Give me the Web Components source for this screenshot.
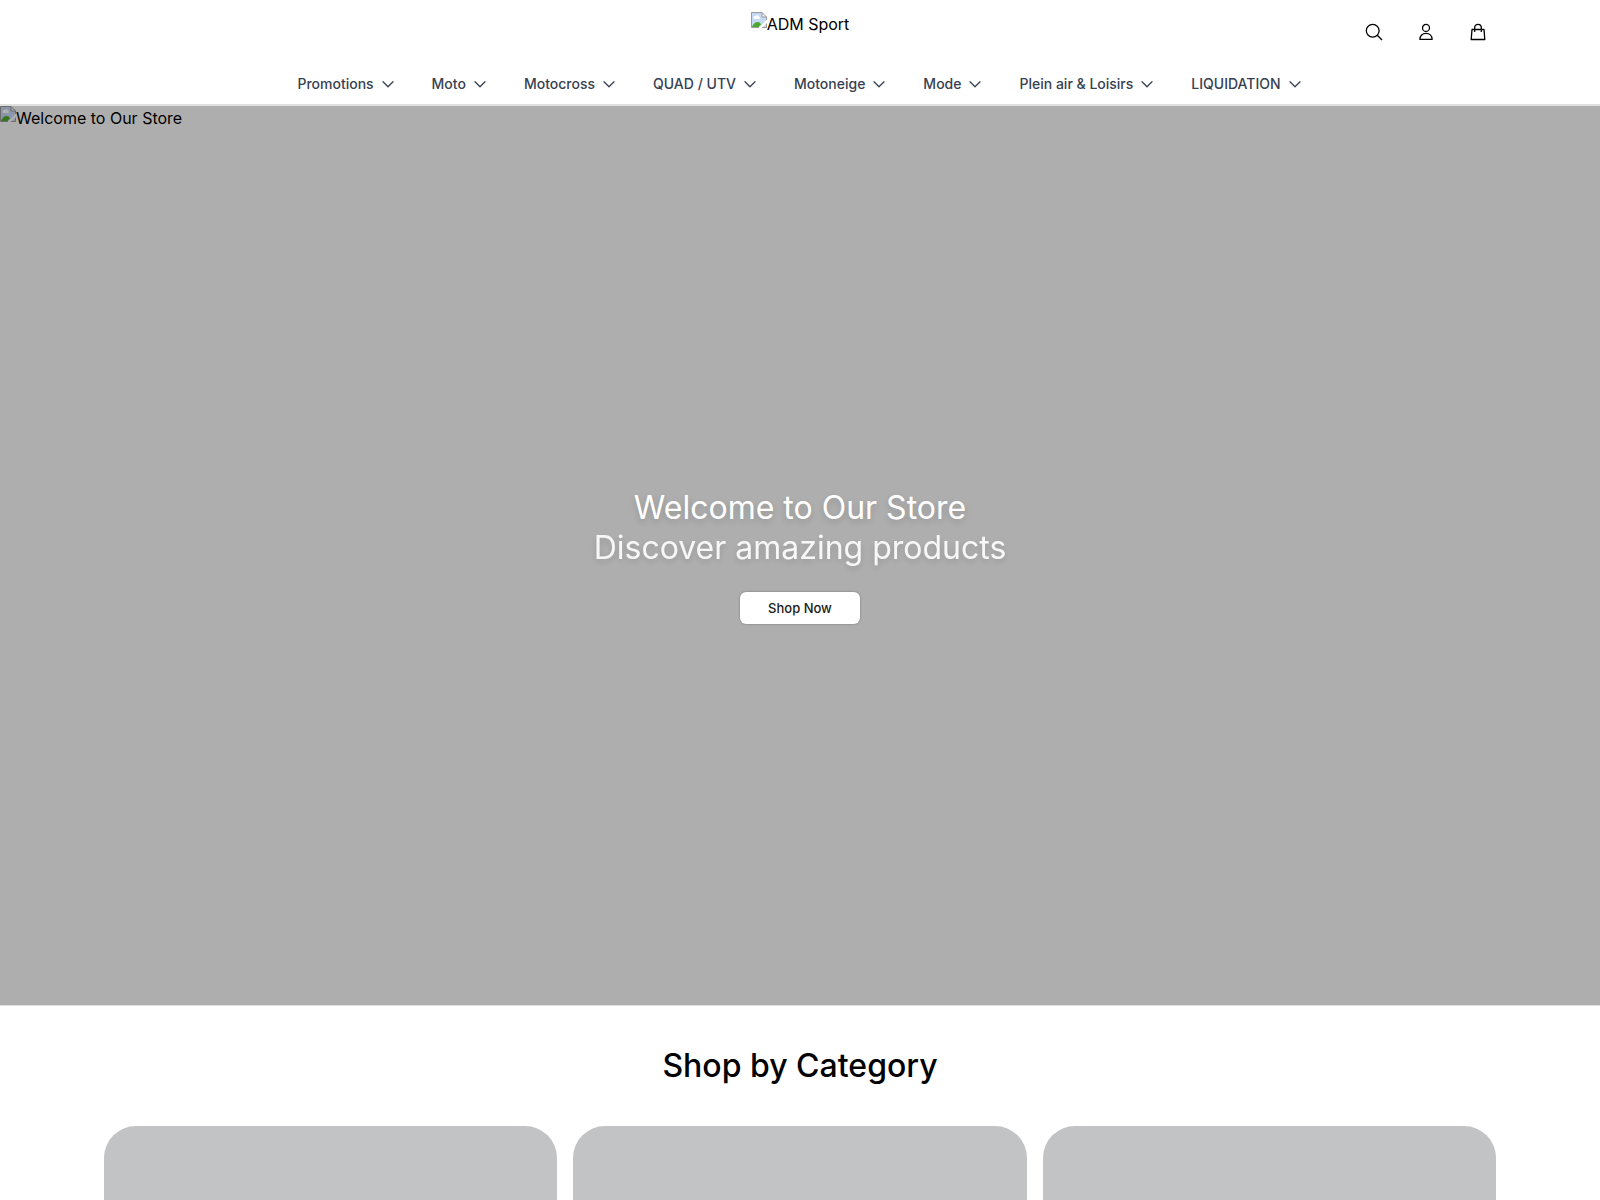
<!DOCTYPE html>
<html lang="fr">
<head>
<meta charset="utf-8">
<meta name="viewport" content="width=device-width, initial-scale=1">
<title>ADM Sport</title>
<style>
  html, body {
    margin: 0;
    background: #fff;
    color: #000;
    font-family: Inter, "Liberation Sans", sans-serif;
    font-size: 16px;
    line-height: 24px;
  }
</style>
</head>
<body>

<template id="alt_image_tpl">
<style>
  :host {
    display: flex;
    align-items: flex-start;
  }
  svg {
    flex: none;
    width: 16px;
    height: 16px;
    filter: brightness(var(--alt-brightness, 1));
  }
</style>
<svg viewBox="0 0 16 16" aria-hidden="true">
  <path d="M.5 .5H11L15.500 5V8L8 15.500H.5Z" fill="#c5d8f4"/>
  <path d="M2.500 5.500a1.500 1.500 0 0 1 2-1.500 2 2 0 0 1 3.500 1 1 1 0 0 1 0 2H3.500a1 1 0 0 1-1-1.500Z" fill="#fff"/>
  <path d="M1 15c1-3 3-5 5.500-5 1.600 0 2.700.7 3.500 2.500L7.500 15Z" fill="#4ca92c"/>
  <path d="M15.500 11.500v4h-4Z" fill="#c5d8f4"/>
  <path d="M11 .5V5h4.500Z" fill="#f5f5f5"/>
  <path d="M15.500 8V5L11 .5H.5v15H8M11 .5V5h4.500M11 15.500h4.500V11.500" fill="none" stroke="#9a9a9a"/>
</svg>
<span><slot></slot></span>
</template>

<template id="nav_item_tpl">
<style>
  :host {
    display: block;
  }
  a {
    display: flex;
    align-items: center;
    gap: 6px;
    color: #374151;
    font-size: 14px;
    font-weight: 500;
    line-height: 20px;
    text-decoration: none;
    white-space: nowrap;
  }
  svg {
    width: 16px;
    height: 16px;
  }
</style>
<a href="#"><slot></slot>
  <svg viewBox="0 0 16 16" fill="none" stroke="currentColor" stroke-width="1.3" stroke-linecap="round" stroke-linejoin="round" aria-hidden="true"><path d="M3 5.700 8 10.700 13 5.700"/></svg>
</a>
</template>

<template id="store_header_tpl">
<style>
  :host {
    display: block;
    background: #fff;
    border-bottom: 2px solid #e0e0e0;
  }
  .top {
    display: grid;
    grid-template-columns: 1fr auto 1fr;
    box-sizing: border-box;
    max-width: 1440px;
    min-height: 64px;
    margin: 0 auto;
    padding: 12px 24px;
  }
  .logo {
    grid-column: 2;
    color: inherit;
    text-decoration: none;
  }
  .actions {
    display: flex;
    justify-content: flex-end;
    align-items: center;
    gap: 16px;
  }
  button {
    display: flex;
    align-items: center;
    justify-content: center;
    width: 36px;
    height: 36px;
    padding: 0;
    border: 0;
    background: none;
    color: #000;
    cursor: pointer;
  }
  .actions svg {
    width: 20px;
    height: 20px;
    fill: none;
    stroke: currentColor;
    stroke-width: 1.3;
  }
  nav {
    display: flex;
    justify-content: center;
    flex-wrap: wrap;
    gap: 36px;
    padding: 10px 24px;
  }
</style>
<div class="top">
  <a class="logo" href="#"><alt-image>ADM Sport</alt-image></a>
  <div class="actions">
    <button type="button" aria-label="Recherche">
      <svg viewBox="0 0 20 20"><circle cx="8.700" cy="8.700" r="6.400"/><path d="M13.300 13.300 18 18"/></svg>
    </button>
    <button type="button" aria-label="Compte">
      <svg viewBox="0 0 20 20"><circle cx="10" cy="5.900" r="3.500"/><path d="M3.900 17.400C3.900 13.700 6.400 11.300 10 11.300s6.100 2.400 6.100 6.100Z" stroke-linejoin="round"/></svg>
    </button>
    <button type="button" aria-label="Panier">
      <svg viewBox="0 0 20 20"><path d="M4 7.500h12l.8 10H3.200ZM6.700 10V5.600a3.300 3.300 0 0 1 6.600 0V10" stroke-linejoin="round"/></svg>
    </button>
  </div>
</div>
<nav><slot></slot></nav>
</template>

<template id="hero_banner_tpl">
<style>
  :host {
    --alt-brightness: .7;
    display: grid;
    height: calc(75vh - 1px);
    background: #aeaeae;
    border-bottom: 1px solid #dedede;
  }
  .media, .content {
    grid-area: 1 / 1;
  }
  .content {
    display: flex;
    flex-direction: column;
    align-items: center;
    justify-content: center;
    color: #fff;
    text-align: center;
  }
  h1, p {
    margin: 0;
    font-size: 32px;
    font-weight: 400;
    line-height: 40px;
    text-shadow: 0 3px 6px rgba(0, 0, 0, .15);
  }
  p {
    opacity: .9;
  }
  a {
    box-sizing: border-box;
    min-width: 120px;
    margin-top: 24px;
    padding: 6px 24px;
    border-radius: 6px;
    background: #fff;
    box-shadow: 0 0 2px rgba(0, 0, 0, .4);
    color: #1a1a1a;
    font-size: 13px;
    font-weight: 500;
    line-height: 20px;
    text-decoration: none;
  }
</style>
<alt-image class="media"><slot name="media"></slot></alt-image>
<div class="content">
  <h1><slot name="title"></slot></h1>
  <p><slot name="text"></slot></p>
  <a href="#"><slot name="action"></slot></a>
</div>
</template>

<template id="category_card_tpl">
<style>
  :host {
    display: block;
    aspect-ratio: 1;
    border-radius: 32px;
    background: #c2c3c5;
  }
</style>
<slot></slot>
</template>

<template id="category_grid_tpl">
<style>
  :host {
    display: block;
    box-sizing: border-box;
    max-width: 1440px;
    margin: 0 auto;
    padding: 40px 24px;
  }
  h2 {
    margin: 0 0 40px;
    font-size: 32px;
    font-weight: 500;
    line-height: 40px;
    text-align: center;
  }
  .grid {
    display: grid;
    grid-template-columns: repeat(3, 1fr);
    gap: 16px;
  }
</style>
<h2><slot name="title"></slot></h2>
<div class="grid"><slot></slot></div>
</template>

<store-header>
  <nav-item>Promotions</nav-item>
  <nav-item>Moto</nav-item>
  <nav-item>Motocross</nav-item>
  <nav-item>QUAD / UTV</nav-item>
  <nav-item>Motoneige</nav-item>
  <nav-item>Mode</nav-item>
  <nav-item>Plein air &amp; Loisirs</nav-item>
  <nav-item>LIQUIDATION</nav-item>
</store-header>
<main>
  <hero-banner>
    <span slot="media">Welcome to Our Store</span>
    <span slot="title">Welcome to Our Store</span>
    <span slot="text">Discover amazing products</span>
    <span slot="action">Shop Now</span>
  </hero-banner>
  <category-grid>
    <span slot="title">Shop by Category</span>
    <category-card></category-card>
    <category-card></category-card>
    <category-card></category-card>
  </category-grid>
</main>

<script>
  class TemplateElement extends HTMLElement {
    constructor() {
      super();
      const id = this.localName.replace('-', '_') + '_tpl';
      const template = document.getElementById(id);
      this.attachShadow({mode: 'open'}).appendChild(template.content.cloneNode(true));
    }
  }

  class AltImage extends TemplateElement {}
  class NavItem extends TemplateElement {}
  class StoreHeader extends TemplateElement {}
  class HeroBanner extends TemplateElement {}
  class CategoryCard extends TemplateElement {}
  class CategoryGrid extends TemplateElement {}

  customElements.define('alt-image', AltImage);
  customElements.define('nav-item', NavItem);
  customElements.define('store-header', StoreHeader);
  customElements.define('hero-banner', HeroBanner);
  customElements.define('category-card', CategoryCard);
  customElements.define('category-grid', CategoryGrid);
</script>
</body>
</html>
